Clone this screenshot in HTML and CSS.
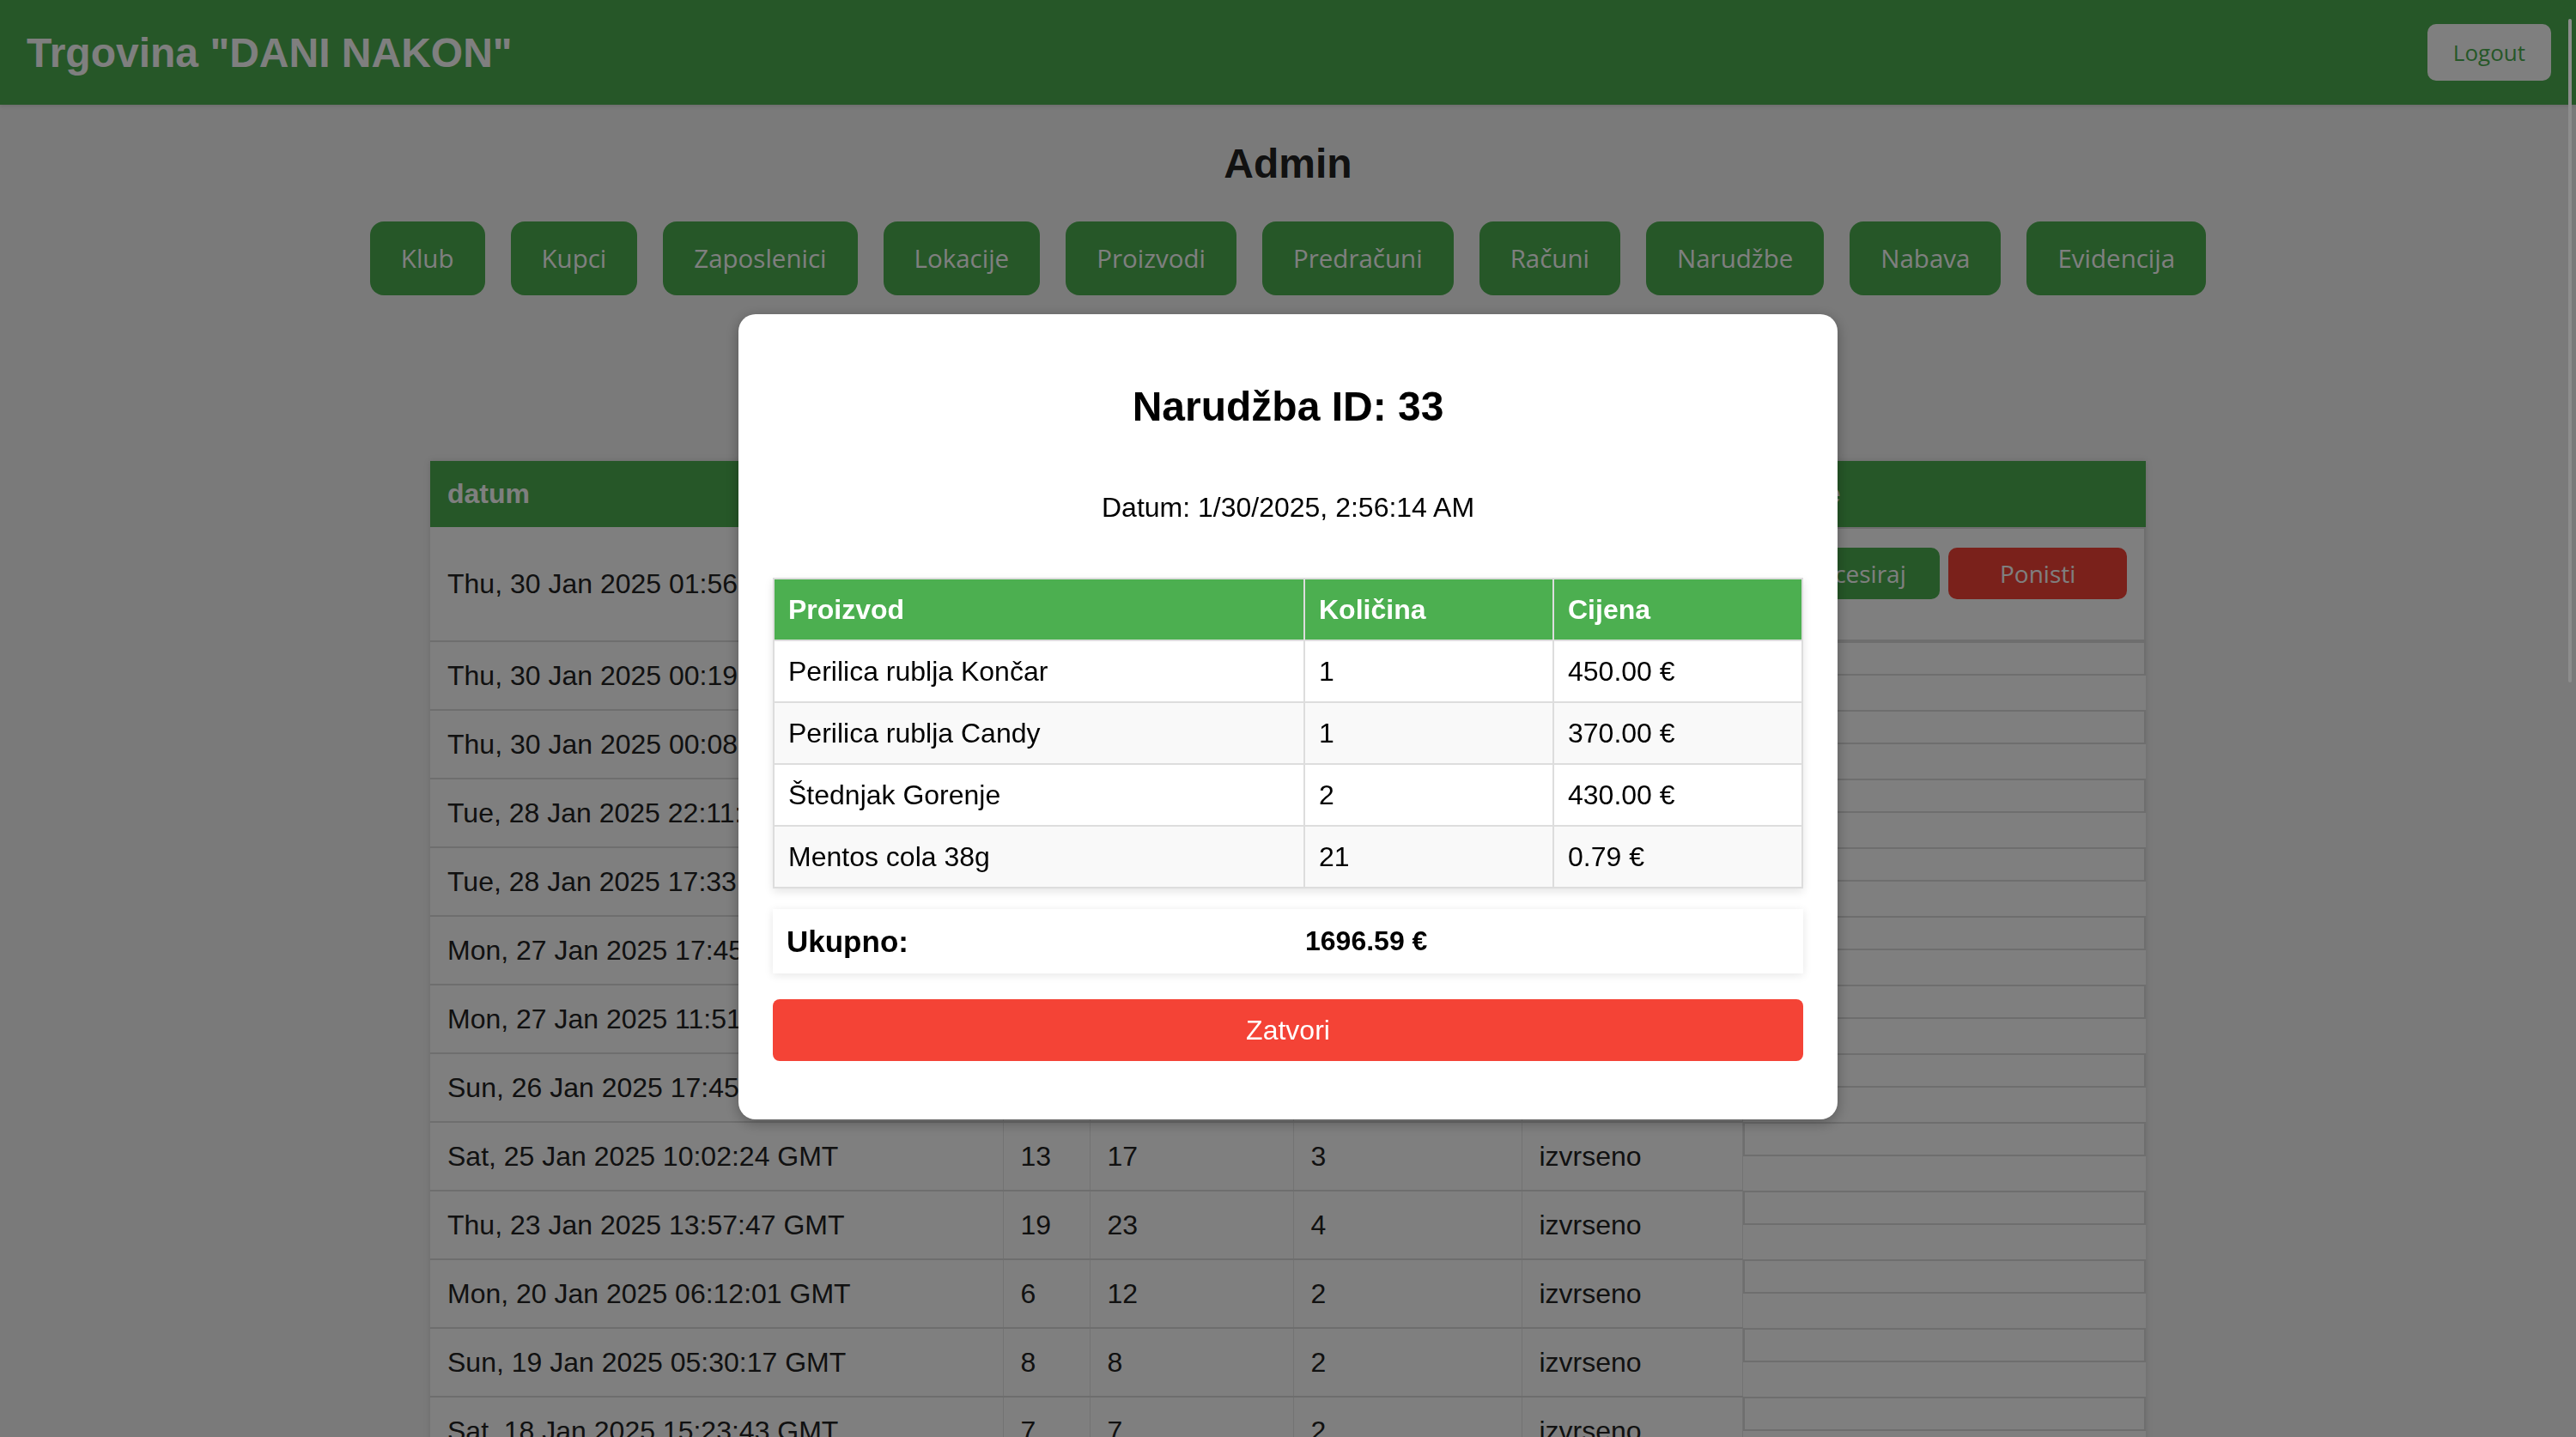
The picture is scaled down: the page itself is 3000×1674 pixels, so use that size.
FILE: index.html
```html
<!DOCTYPE html>
<html lang="hr">
<head>
<meta charset="utf-8">
<title>Trgovina "DANI NAKON" - Admin</title>
<link rel="stylesheet" href="styles.css">
</head>
<body>
<header class="topbar">
  <h1 class="brand">Trgovina "DANI NAKON"</h1>
  <button class="logout">Logout</button>
</header>

<main class="admin">
  <h2 class="admin-title">Admin</h2>
  <nav class="admin-nav">
    <button class="nav-btn">Klub</button>
    <button class="nav-btn">Kupci</button>
    <button class="nav-btn">Zaposlenici</button>
    <button class="nav-btn">Lokacije</button>
    <button class="nav-btn">Proizvodi</button>
    <button class="nav-btn">Predračuni</button>
    <button class="nav-btn">Računi</button>
    <button class="nav-btn">Narudžbe</button>
    <button class="nav-btn">Nabava</button>
    <button class="nav-btn">Evidencija</button>
  </nav>

  <table class="orders">
    <colgroup>
      <col class="c-datum"><col class="c-a"><col class="c-b"><col class="c-c"><col class="c-d"><col class="c-akcije">
    </colgroup>
    <thead>
      <tr><th>datum</th><th>id</th><th>kupac</th><th>stavke</th><th>status</th><th>Akcije</th></tr>
    </thead>
    <tbody>
      <tr><td>Thu, 30 Jan 2025 01:56:14 GMT</td><td>21</td><td>25</td><td>4</td><td>na cekanju</td>
        <td class="akcije"><div class="akcije-box first"><button class="btn-process">Procesiraj</button><button class="btn-cancel">Ponisti</button></div></td></tr>
      <tr><td>Thu, 30 Jan 2025 00:19:52 GMT</td><td>20</td><td>24</td><td>3</td><td>izvrseno</td><td class="akcije"><div class="akcije-box"></div></td></tr>
      <tr><td>Thu, 30 Jan 2025 00:08:31 GMT</td><td>18</td><td>22</td><td>2</td><td>izvrseno</td><td class="akcije"><div class="akcije-box"></div></td></tr>
      <tr><td>Tue, 28 Jan 2025 22:11:05 GMT</td><td>17</td><td>21</td><td>5</td><td>izvrseno</td><td class="akcije"><div class="akcije-box"></div></td></tr>
      <tr><td>Tue, 28 Jan 2025 17:33:40 GMT</td><td>16</td><td>20</td><td>2</td><td>izvrseno</td><td class="akcije"><div class="akcije-box"></div></td></tr>
      <tr><td>Mon, 27 Jan 2025 17:45:12 GMT</td><td>15</td><td>19</td><td>3</td><td>izvrseno</td><td class="akcije"><div class="akcije-box"></div></td></tr>
      <tr><td>Mon, 27 Jan 2025 11:51:27 GMT</td><td>14</td><td>18</td><td>2</td><td>izvrseno</td><td class="akcije"><div class="akcije-box"></div></td></tr>
      <tr><td>Sun, 26 Jan 2025 17:45:09 GMT</td><td>12</td><td>16</td><td>4</td><td>izvrseno</td><td class="akcije"><div class="akcije-box"></div></td></tr>
      <tr><td>Sat, 25 Jan 2025 10:02:24 GMT</td><td>13</td><td>17</td><td>3</td><td>izvrseno</td><td class="akcije"><div class="akcije-box"></div></td></tr>
      <tr><td>Thu, 23 Jan 2025 13:57:47 GMT</td><td>19</td><td>23</td><td>4</td><td>izvrseno</td><td class="akcije"><div class="akcije-box"></div></td></tr>
      <tr><td>Mon, 20 Jan 2025 06:12:01 GMT</td><td>6</td><td>12</td><td>2</td><td>izvrseno</td><td class="akcije"><div class="akcije-box"></div></td></tr>
      <tr><td>Sun, 19 Jan 2025 05:30:17 GMT</td><td>8</td><td>8</td><td>2</td><td>izvrseno</td><td class="akcije"><div class="akcije-box"></div></td></tr>
      <tr><td>Sat, 18 Jan 2025 15:23:43 GMT</td><td>7</td><td>7</td><td>2</td><td>izvrseno</td><td class="akcije"><div class="akcije-box"></div></td></tr>
    </tbody>
  </table>
</main>

<div class="overlay">
  <div class="modal">
    <h2 class="modal-title">Narudžba ID: 33</h2>
    <p class="modal-date">Datum: 1/30/2025, 2:56:14 AM</p>
    <table class="items">
      <colgroup><col class="i-name"><col class="i-qty"><col class="i-price"></colgroup>
      <thead>
        <tr><th>Proizvod</th><th>Količina</th><th>Cijena</th></tr>
      </thead>
      <tbody>
        <tr><td>Perilica rublja Končar</td><td>1</td><td>450.00 €</td></tr>
        <tr><td>Perilica rublja Candy</td><td>1</td><td>370.00 €</td></tr>
        <tr><td>Štednjak Gorenje</td><td>2</td><td>430.00 €</td></tr>
        <tr><td>Mentos cola 38g</td><td>21</td><td>0.79 €</td></tr>
      </tbody>
    </table>
    <div class="total">
      <span class="total-label">Ukupno:</span>
      <span class="total-value">1696.59 €</span>
    </div>
    <button class="close-btn">Zatvori</button>
  </div>
</div>

<div class="scroll-thumb"></div>
</body>
</html>
```

FILE: styles.css
```css
* {
  box-sizing: border-box;
}

html,
body {
  margin: 0;
  height: 100%;
  overflow: hidden;
}

body {
  background: #f4f4f4;
  font-family: "Liberation Sans", Arial, sans-serif;
  color: #333;
}

/* ---------- top bar ---------- */
.topbar {
  height: 122px;
  background: #4caf50;
  display: flex;
  align-items: center;
  justify-content: space-between;
  padding: 0 29px 0 31px;
  box-shadow: 0 2px 4px rgba(0, 0, 0, 0.1);
}

.brand {
  margin: 0;
  font-size: 48px;
  line-height: 55px;
  font-weight: bold;
  color: #fff;
}

.logout {
  font-family: "Open Sans", "Noto Sans", sans-serif;
  font-size: 26px;
  line-height: 36px;
  padding: 15px 30px;
  background: #fff;
  color: #4caf50;
  border: none;
  border-radius: 10px;
}

/* ---------- admin area ---------- */
.admin-title {
  margin: 41px 0 40px;
  text-align: center;
  font-size: 48px;
  line-height: 55px;
  font-weight: bold;
  color: #222;
}

.admin-nav {
  display: flex;
  justify-content: center;
  gap: 30px;
}

.nav-btn {
  font-family: "Open Sans", "Noto Sans", sans-serif;
  font-size: 29.5px;
  line-height: 42px;
  padding: 22px 36px;
  background: #4caf50;
  color: #fff;
  border: none;
  border-radius: 16px;
}

/* ---------- orders table ---------- */
.orders {
  width: 1998px;
  margin: 193px auto 0;
  border-collapse: collapse;
  table-layout: fixed;
  background: #fff;
  box-shadow: 0 0 8px rgba(0, 0, 0, 0.12);
  font-size: 32px;
  color: #222;
}

.c-datum { width: 667px; }
.c-a { width: 101px; }
.c-b { width: 237px; }
.c-c { width: 266px; }
.c-d { width: 257px; }
.c-akcije { width: 470px; }

.orders th {
  background: #4caf50;
  color: #fff;
  text-align: left;
  font-weight: bold;
  padding: 20px;
  line-height: 37px;
  white-space: nowrap;
  overflow: hidden;
}

.orders td {
  padding: 20px;
  line-height: 38px;
  border-bottom: 2px solid #dcdcdc;
  border-right: 1px solid #e6e6e6;
  white-space: nowrap;
  overflow: hidden;
}

.orders td.akcije {
  padding: 0;
  vertical-align: top;
  border-bottom: none;
  border-right: none;
  border-left: 1px solid #e6e6e6;
}

.akcije-box {
  display: flex;
  gap: 10px;
  border: 2px solid #dcdcdc;
  padding: 18px 20px;
}

.akcije-box.first {
  padding: 22px 20px 47px;
}

.btn-process,
.btn-cancel {
  flex: 1;
  font-family: "Open Sans", "Noto Sans", sans-serif;
  font-size: 28px;
  line-height: 40px;
  padding: 10px;
  color: #fff;
  border: none;
  border-radius: 10px;
}

.btn-process { background: #4caf50; }
.btn-cancel { background: #f44336; }

/* ---------- modal ---------- */
.overlay {
  position: fixed;
  inset: 0;
  background: rgba(0, 0, 0, 0.5);
  display: flex;
  align-items: center;
  justify-content: center;
  padding-bottom: 4px;
}

.modal {
  width: 1280px;
  background: #fff;
  border-radius: 20px;
  padding: 40px;
  display: flex;
  flex-direction: column;
  box-shadow: 0 4px 16px rgba(0, 0, 0, 0.3);
  color: #000;
}

.modal-title {
  margin: 40px 0;
  text-align: center;
  font-size: 48px;
  line-height: 55px;
  font-weight: bold;
}

.modal-date {
  margin: 32px 0;
  text-align: center;
  font-size: 32px;
  line-height: 37px;
}

.items {
  margin-top: 31px;
  width: 100%;
  border-collapse: collapse;
  table-layout: fixed;
  font-size: 32px;
  box-shadow: 0 4px 10px rgba(0, 0, 0, 0.1);
}

.i-name { width: 618px; }
.i-qty { width: 290px; }
.i-price { width: auto; }

.items th,
.items td {
  padding: 16px;
  line-height: 38px;
  border: 2px solid #ddd;
  text-align: left;
}

.items th {
  background: #4caf50;
  color: #fff;
  font-weight: bold;
}

.items tbody tr:nth-child(even) td {
  background: #f9f9f9;
}

.total {
  margin-top: 24px;
  height: 75px;
  display: grid;
  grid-template-columns: 604px 1fr;
  align-items: center;
  padding: 0 16px;
  background: #fff;
  box-shadow: 0 2px 10px rgba(0, 0, 0, 0.1);
  font-weight: bold;
}

.total-label { font-size: 35px; }
.total-value { font-size: 32px; }

.close-btn {
  margin: 30px 0 28px;
  height: 72px;
  background: #f44336;
  color: #fff;
  border: none;
  border-radius: 8px;
  font-family: "Liberation Sans", Arial, sans-serif;
  font-size: 32px;
}

/* overlay scrollbar thumb */
.scroll-thumb {
  position: fixed;
  top: 22px;
  right: 5px;
  width: 4px;
  height: 773px;
  border-radius: 2px;
  background: #8c8c8c;
}
```
